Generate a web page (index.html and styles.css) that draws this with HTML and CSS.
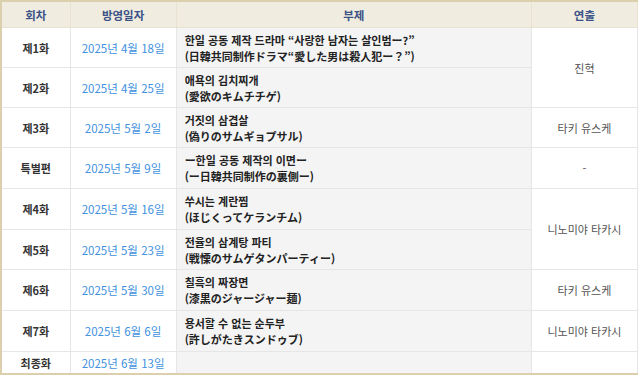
FILE: index.html
```html
<!DOCTYPE html>
<html lang="ko">
<head>
<meta charset="utf-8">
<link rel="stylesheet" href="styles.css">
</head>
<body>
<table class="ep">
  <colgroup>
    <col class="c-no">
    <col class="c-date">
    <col class="c-title">
    <col class="c-dir">
  </colgroup>
  <thead>
    <tr class="head">
      <th>회차</th>
      <th>방영일자</th>
      <th>부제</th>
      <th>연출</th>
    </tr>
  </thead>
  <tbody>
    <tr class="r40">
      <td class="no">제1화</td>
      <td class="date">2025년 4월 18일</td>
      <td class="title">한일 공동 제작 드라마 “사랑한 남자는 살인범ー?”<br>(日韓共同制作ドラマ“愛した男は殺人犯ー？”)</td>
      <td class="dir" rowspan="2">진혁</td>
    </tr>
    <tr class="r40">
      <td class="no">제2화</td>
      <td class="date">2025년 4월 25일</td>
      <td class="title">애욕의 김치찌개<br>(愛欲のキムチチゲ)</td>
    </tr>
    <tr class="r40">
      <td class="no">제3화</td>
      <td class="date">2025년 5월 2일</td>
      <td class="title">거짓의 삼겹살<br>(偽りのサムギョプサル)</td>
      <td class="dir">타키 유스케</td>
    </tr>
    <tr class="r41">
      <td class="no">특별편</td>
      <td class="date">2025년 5월 9일</td>
      <td class="title">ー한일 공동 제작의 이면ー<br>(ー日韓共同制作の裏側ー)</td>
      <td class="dir">-</td>
    </tr>
    <tr class="r41">
      <td class="no">제4화</td>
      <td class="date">2025년 5월 16일</td>
      <td class="title">쑤시는 계란찜<br>(ほじくってケランチム)</td>
      <td class="dir" rowspan="2">니노미야 타카시</td>
    </tr>
    <tr class="r40">
      <td class="no">제5화</td>
      <td class="date">2025년 5월 23일</td>
      <td class="title">전율의 삼계탕 파티<br>(戦慄のサムゲタンパーティー)</td>
    </tr>
    <tr class="r41">
      <td class="no">제6화</td>
      <td class="date">2025년 5월 30일</td>
      <td class="title">칠흑의 짜장면<br>(漆黒のジャージャー麺)</td>
      <td class="dir">타키 유스케</td>
    </tr>
    <tr class="r41">
      <td class="no">제7화</td>
      <td class="date">2025년 6월 6일</td>
      <td class="title">용서할 수 없는 순두부<br>(許しがたきスンドゥブ)</td>
      <td class="dir">니노미야 타카시</td>
    </tr>
    <tr class="last">
      <td class="no">최종화</td>
      <td class="date">2025년 6월 13일</td>
      <td class="title"></td>
      <td class="dir"></td>
    </tr>
  </tbody>
</table>
</body>
</html>
```
FILE: styles.css
```css
html, body {
  margin: 0;
  padding: 0;
  background: #ffffff;
}

body {
  font-family: "Noto Sans CJK KR", "Noto Sans", sans-serif;
  font-size: 11px;
  color: #333333;
}

.ep {
  width: 638px;
  border-collapse: collapse;
  table-layout: fixed;
  border-top: 2px solid #dccfae;
  border-left: 2px solid #dccfae;
  border-bottom: 2px solid #dccfae;
}

.c-no { width: 69px; }
.c-date { width: 106px; }
.c-title { width: 355px; }
.c-dir { width: 106px; }

.ep th,
.ep td {
  border: 1px solid #e6e6e6;
  padding: 0 8px;
  text-align: center;
  vertical-align: middle;
  line-height: 16px;
}

.head th {
  height: 25px;
  background: #f1ece0;
  color: #3b5387;
  font-weight: bold;
  font-size: 11.5px;
  border-color: #e9e2d1;
}

.r40 td { height: 39px; }
.r41 td { height: 40px; }
.last td { height: 21px; }

.no {
  font-weight: bold;
  color: #333333;
}

.date {
  color: #4191e0;
  font-size: 11.5px;
}

.title {
  background: #f4f4f4;
  text-align: left !important;
  font-weight: bold;
  color: #222222;
  padding-left: 8px;
}

.dir {
  color: #555555;
  background: #ffffff;
}
```
